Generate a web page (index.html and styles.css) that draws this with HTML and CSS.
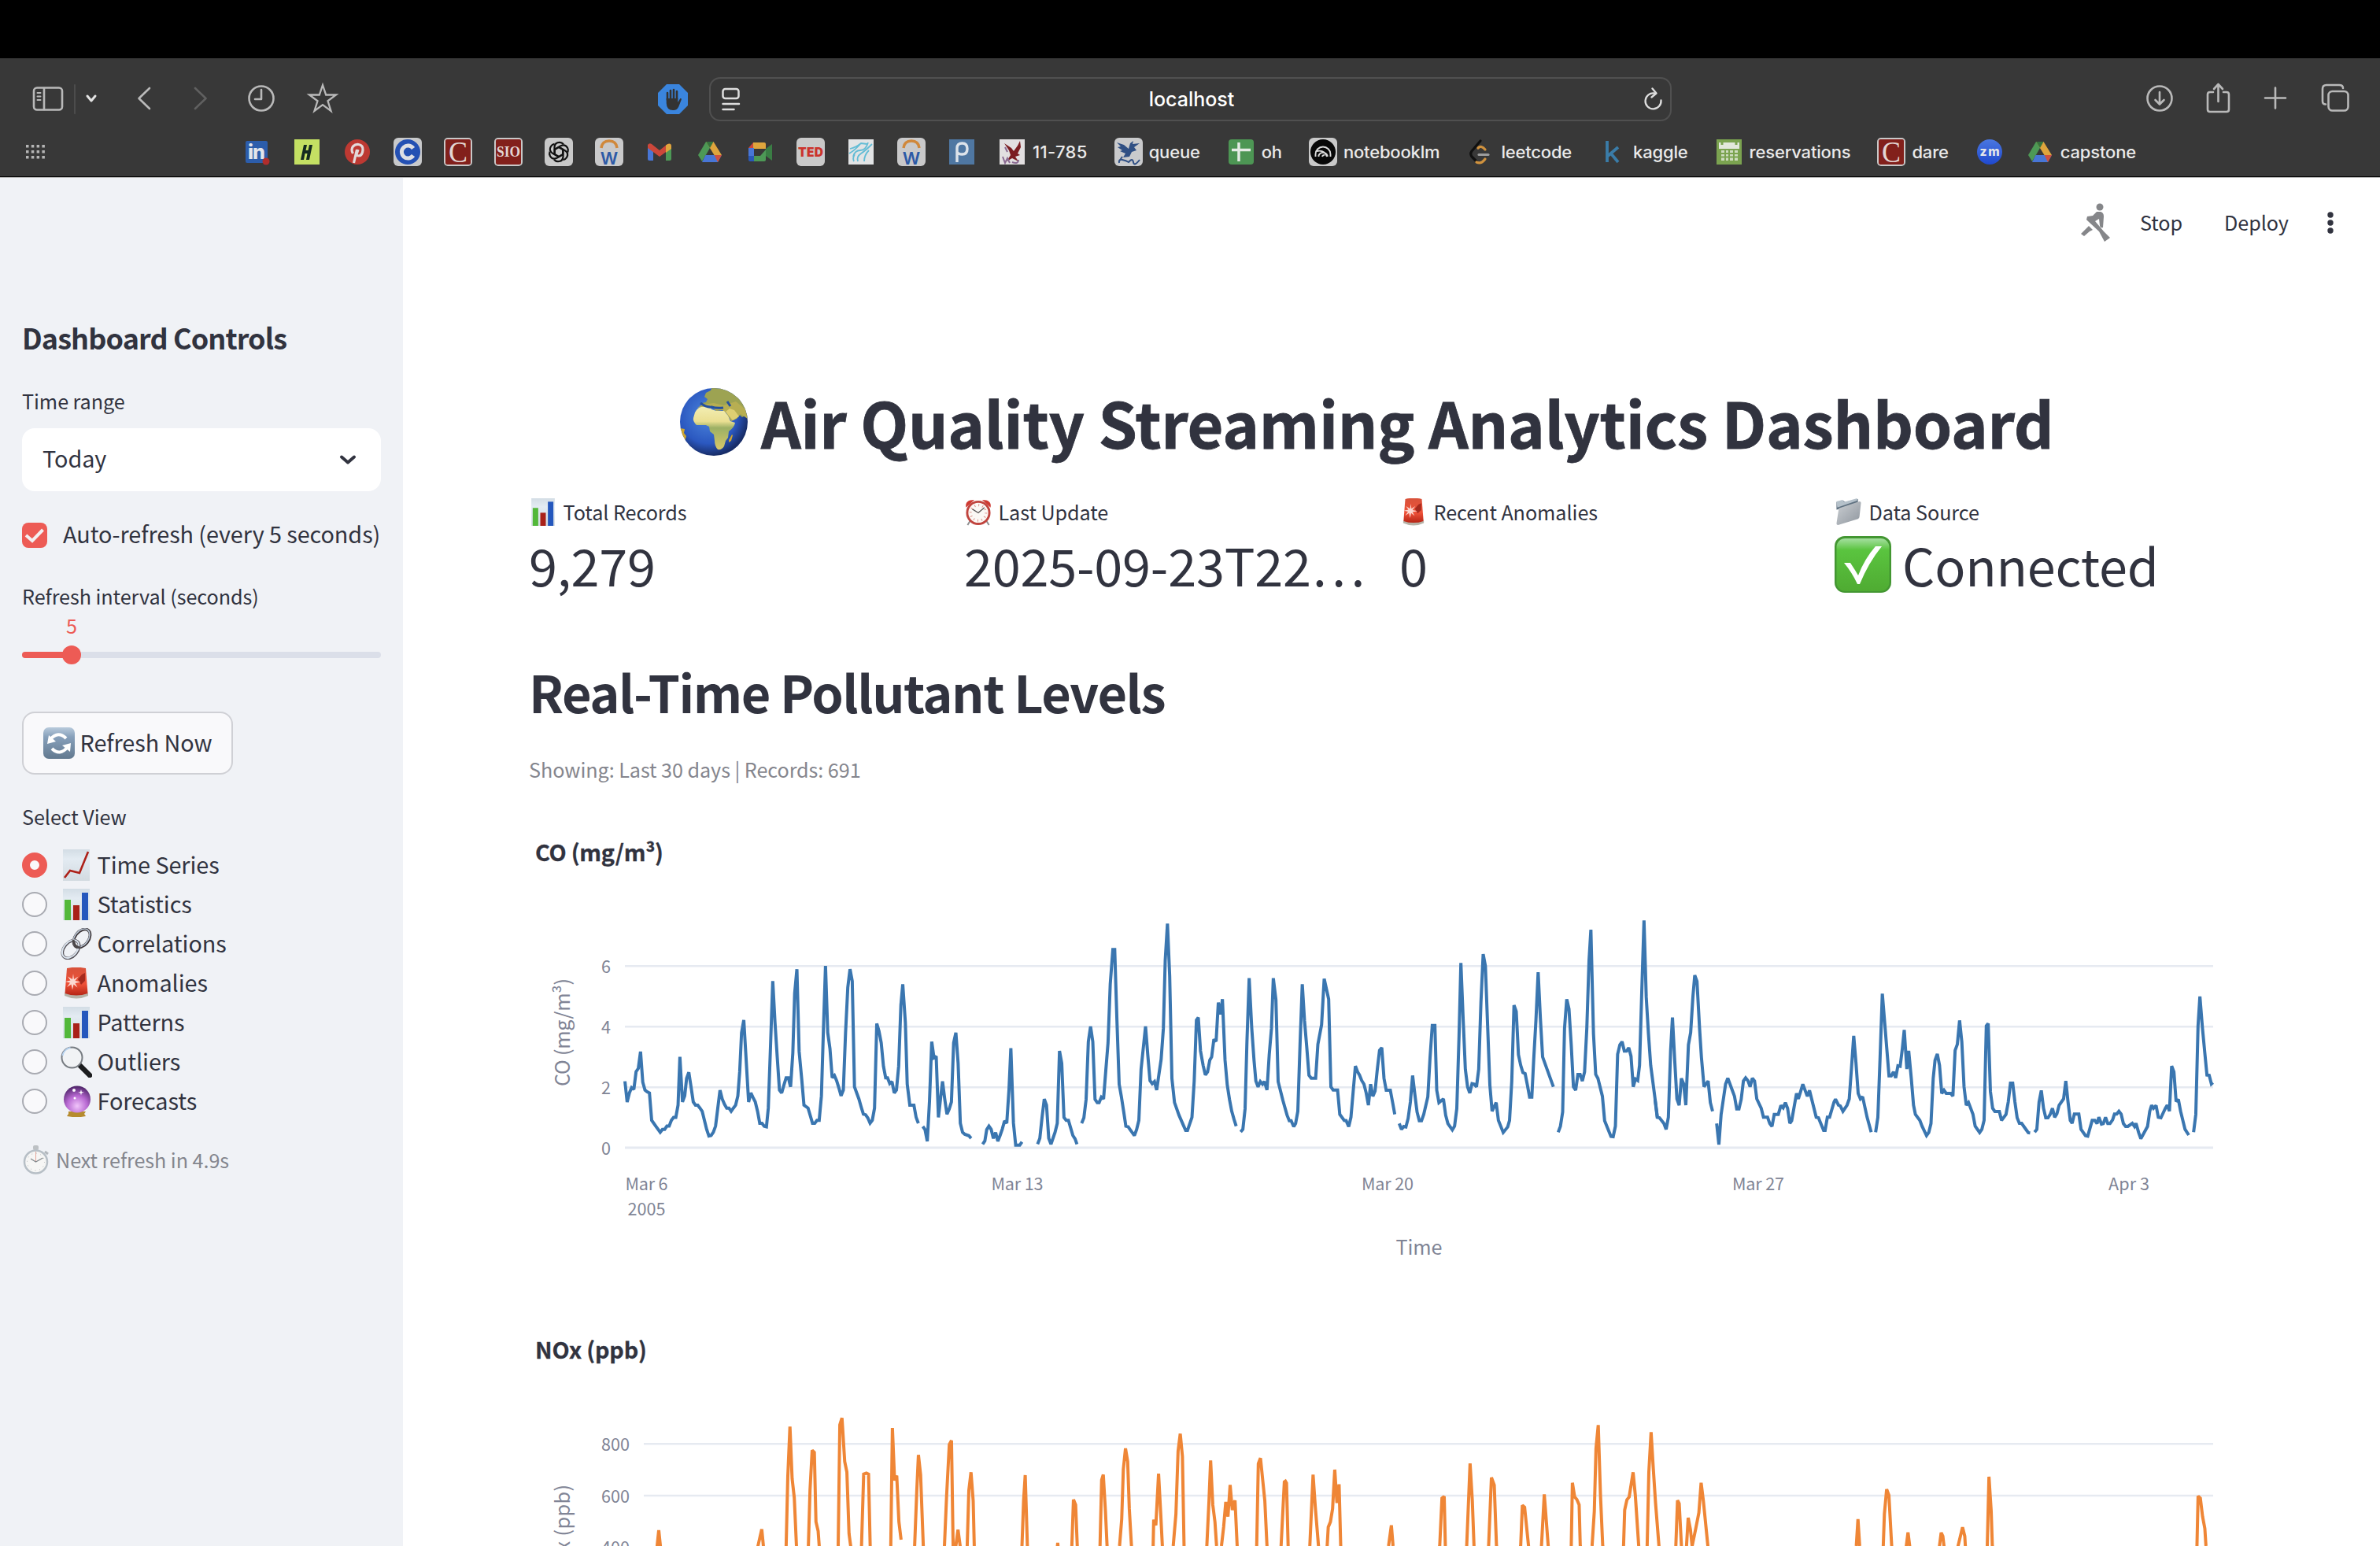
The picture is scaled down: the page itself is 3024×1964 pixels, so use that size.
FILE: index.html
```html
<!DOCTYPE html>
<html lang="en">
<head>
<meta charset="utf-8">
<title>Air Quality Streaming Analytics Dashboard</title>
<link rel="stylesheet" href="styles.css">
</head>
<body>
<svg class="defs" width="0" height="0" aria-hidden="true">
  <defs>
    <linearGradient id="paper" x1="0" y1="0" x2="0" y2="1"><stop offset="0" stop-color="#d3dde5"/><stop offset=".3" stop-color="#e3ebf2"/><stop offset="1" stop-color="#d3dbe1"/></linearGradient>
    <linearGradient id="steel" x1="0" y1="0" x2="0" y2="1"><stop offset="0" stop-color="#b9cbdc"/><stop offset=".3" stop-color="#87a0bb"/><stop offset="1" stop-color="#62798f"/></linearGradient>
    <linearGradient id="leaf" x1="0" y1="0" x2="0" y2="1"><stop offset="0" stop-color="#a5dfa0"/><stop offset=".22" stop-color="#5ac43f"/><stop offset="1" stop-color="#4fab32"/></linearGradient>
    <radialGradient id="ocean" cx=".42" cy=".4" r=".6"><stop offset="0" stop-color="#4d87dd"/><stop offset=".7" stop-color="#2b58c0"/><stop offset="1" stop-color="#182d68"/></radialGradient>
    <radialGradient id="orb" cx=".5" cy=".75" r=".75"><stop offset="0" stop-color="#f0c4fa"/><stop offset=".5" stop-color="#b869d2"/><stop offset="1" stop-color="#4b2266"/></radialGradient>
    <linearGradient id="lamp" x1="0" y1="0" x2="0" y2="1"><stop offset="0" stop-color="#d8523b"/><stop offset=".6" stop-color="#ee5138"/><stop offset="1" stop-color="#b52516"/></linearGradient>
    <linearGradient id="folder" x1="0" y1="0" x2="1" y2="1"><stop offset="0" stop-color="#ccd0d4"/><stop offset="1" stop-color="#8e959d"/></linearGradient>
    <linearGradient id="zoomblue" x1="0" y1="0" x2="0" y2="1"><stop offset="0" stop-color="#4a77e0"/><stop offset="1" stop-color="#1f49cf"/></linearGradient>
    <linearGradient id="land" x1="0" y1="0" x2="0" y2="1"><stop offset="0" stop-color="#f3eeb4"/><stop offset=".35" stop-color="#eadf92"/><stop offset=".5" stop-color="#9cb065"/><stop offset="1" stop-color="#d8c768"/></linearGradient>

    <symbol id="e-bars" viewBox="0 0 40 40"><rect x="3" width="34" height="40" fill="url(#paper)"/><rect x="5" y="14" width="8" height="26" fill="#53b83a"/><rect x="16" y="21" width="8" height="19" fill="#a92119"/><rect x="27" y="5" width="8" height="35" fill="#2457bd"/></symbol>
    <symbol id="e-line" viewBox="0 0 40 40"><rect x="3" width="34" height="40" fill="url(#paper)"/><path d="M5 36l7-9 12 3L35 3" fill="none" stroke="#ad2119" stroke-width="2.6"/></symbol>
    <symbol id="e-link" viewBox="0 0 40 40"><g fill="none"><ellipse cx="27" cy="13" rx="13" ry="8.6" transform="rotate(-52 27 13)" stroke="#3b3436" stroke-width="3.6"/><ellipse cx="26.5" cy="12.6" rx="13" ry="8.6" transform="rotate(-52 26.500 12.600)" stroke="#b9c4d3" stroke-width="1.6"/><ellipse cx="13" cy="27" rx="13" ry="8.600" transform="rotate(-50 13 27)" stroke="#545057" stroke-width="3.6"/><ellipse cx="12.600" cy="26.600" rx="13" ry="8.600" transform="rotate(-50 12.600 26.600)" stroke="#dbe4ee" stroke-width="2"/><path d="M16 15q1 9 8 10" stroke="#4b4749" stroke-width="3"/></g></symbol>
    <symbol id="e-siren" viewBox="0 0 40 40"><path d="M5 33q15-5 30 0v3q-15 7-30 0z" fill="#b6b3a8"/><path d="M8 1q12-2.500 24 0l2.500 32q-14.500 5-29 0z" fill="url(#lamp)"/><path d="M22 15l5-6 4-2 0 10-5 5z" fill="#a52a1e"/><path d="M16 8l1 7 5.500-3.500-4 5.500 7 1.500-7 1.500 3 5.500-5-4-1.500 7-1.500-7-5.500 3.500 4-5.500-6-1.500 6.500-1.500-3.500-5 6 3.500z" fill="#fbd9d2"/></symbol>
    <symbol id="e-glass" viewBox="0 0 40 40"><path d="M25 25l12 12" stroke="#1c1d1f" stroke-width="6.500" stroke-linecap="round"/><circle cx="14.500" cy="14.500" r="13" fill="#f1f3f5" stroke="#777c82" stroke-width="2"/><path d="M2.500 12a12.500 12.500 0 0 1 10-10" fill="none" stroke="#b8d3f0" stroke-width="2"/></symbol>
    <symbol id="e-orb" viewBox="0 0 40 40"><path d="M10 33h22l-2 3 2 3q-11 2.500-24 0l2-3z" fill="#b58b2e"/><circle cx="21" cy="17.500" r="17" fill="url(#orb)"/><circle cx="17" cy="6" r="2" fill="#fff"/><path d="M26 5l.8 3 3 .8-3 .8-.8 3-.8-3-3-.8 3-.8z" fill="#fff"/><circle cx="18" cy="16" r="1.500" fill="#fff"/></symbol>
    <symbol id="e-stop" viewBox="0 0 36 38"><rect x="14" y="1" width="7" height="6" rx="2" fill="#bdc1c4"/><path d="M29 9l4 3" stroke="#b2b7bc" stroke-width="3"/><circle cx="17.500" cy="22" r="14.500" fill="#f6f6f5" stroke="#b7bfc6" stroke-width="2.500"/><path d="M17.500 22V9" stroke="#e6a79b"/><path d="M11 18l6.500 4 9-5" fill="none" stroke="#81868a" stroke-width="1.300"/><circle cx="17.500" cy="22" r="11" fill="none" stroke="#b0b4b7" stroke-dasharray="1 4.760"/></symbol>
    <symbol id="e-alarm" viewBox="0 0 36 36"><path d="M7 30l-3 5M29 30l3 5" stroke="#8e8e90" stroke-width="2"/><path d="M2 12q-2-10 11-10zM34 12q2-10-11-10z" fill="#cf3a32"/><circle cx="18" cy="19" r="14.500" fill="#fbf8f5" stroke="#c0443e" stroke-width="3"/><path d="M10 14l8 5 8-7" fill="none" stroke="#565353" stroke-width="1.300"/><circle cx="18" cy="19" r="10" fill="none" stroke="#d98c85" stroke-width="3" stroke-dasharray="1 4.230"/></symbol>
    <symbol id="e-folder" viewBox="0 0 36 36"><path d="M2 5l9-2 2 2 17-4v8L2 15z" fill="#5f7180"/><path d="M2 4l8-2 2 3 17-5v3L3 12z" fill="#b5c1ca"/><path d="M5 13l27-9q2 0 2 2l-2 18q0 2-2 3L4 35q-2 0-2-2z" fill="url(#folder)"/></symbol>
    <symbol id="e-refresh" viewBox="0 0 40 40"><rect width="40" height="40" rx="7" fill="url(#steel)"/><path d="M9 15q10-11 20-1M31 25q-10 12-20 2" fill="none" stroke="#fff" stroke-width="4"/><path d="M7 10l-2 11 11-3zM24 23l11-3-1 11z" fill="#fff"/></symbol>
    <symbol id="e-check" viewBox="0 0 72 72"><rect width="72" height="72" rx="13" fill="#439632"/><rect x="2.500" y="3" width="67" height="67" rx="11" fill="url(#leaf)"/><path d="M12 34h8q6 9 10 16Q38 29 52 13h8Q43 34 32 61h-3Q22 46 12 34z" fill="#fff"/></symbol>
    <symbol id="e-globe" viewBox="0 0 86 86">
      <clipPath id="disc"><circle cx="43" cy="43" r="43"/></clipPath>
      <circle cx="43" cy="43" r="43" fill="url(#ocean)"/>
      <g clip-path="url(#disc)">
        <path d="M26 24l2-5 5-1 2-4-4-3 2-5 6-3 2-5h14l14 8 12 14 4 14-6 3-7-6-4 1-4-5-6 1-1-4-5 2-3-5-4 1 2 5-3 1-5-6-5 1-5 5-4-1z" fill="#9da352"/>
        <path d="M22 25l6-1 9-2 5 3 4 4 8-1 5 4 6 10 7-3 5-6 9 6-3-12-12-10-16 5-12-3-14 2z" fill="#b7ae52"/>
        <path d="M19 31q3-6 8-7l11-1 2 4 6 2 10 0 5 6 3 7 6 2q-1 6-8 11l-1 8-3 4-2 7q-3 5-8 4-4-4-4-11l-1-8-5-4-1-6-4-2-12 0q-5-5-4-9z" fill="url(#land)"/>
        <path d="M58 30l9 11 8-5-6-8-6-2z" fill="#dfcf72"/>
        <path d="M62 66l4-7 1 1-2 7-3 2zM0 51l6 1-1 5 3 4-2 7-5 5z" fill="#cfa62e"/>
        <path d="M26 19q8 6 14 5 6 2 15 1M60 17l4 6" fill="none" stroke="#24509f" stroke-width="3"/>
      </g>
    </symbol>
    <symbol id="i-drive" viewBox="0 0 30 26"><path d="M10 0h9.500L11 15 5 25 0 17z" fill="#4d9956"/><path d="M10 0h9.500L30 17h-9.500z" fill="#dfa53d"/><path d="M9.500 17H30l-5 9H5z" fill="#4876d6"/><path d="M20.500 17H30l-5 9z" fill="#cf5140"/><path d="M10 0h9.500L15 8z" fill="#36733e"/></symbol>
    <symbol id="i-cmu" viewBox="0 0 36 36"><rect width="36" height="36" rx="5" fill="#c9c8c8"/><rect x="2" y="2" width="32" height="32" rx="2" fill="#82201b"/></symbol>
    <symbol id="i-arcw" viewBox="0 0 36 36"><rect width="36" height="36" rx="6" fill="#c9c9ca"/><path d="M8 13q1-9 10-9t10 9" fill="none" stroke="#d0883b" stroke-width="3.500"/></symbol>
  </defs>
</svg>

<div class="notch"></div>
<header class="browser">
  <div class="toolbar">
    <svg class="tools tools-left" viewBox="0 0 440 56" fill="none" stroke="#b9b9b9" stroke-width="2.600" stroke-linecap="round" stroke-linejoin="round">
      <rect x="3" y="13.500" width="36" height="28" rx="4"/><path d="M16 14v27"/><path d="M7.500 20h4M7.500 24.500h4M7.500 29h4" stroke-width="2"/>
      <path d="M55 10v36" stroke="#4c4c4c" stroke-width="2"/><path d="M71 24l5 6 5-6" stroke="#e3e3e3" stroke-width="3"/>
      <path d="M150 14L136.500 27 150 40"/><path d="M208 14l13.500 13L208 40" stroke="#606060"/>
      <circle cx="292" cy="27" r="15.500"/><path d="M292 16v12h-8"/>
      <path d="M370 10l4.200 12.500H387l-10.500 7.800 4 12.700-10.500-7.800-10.500 7.800 4-12.700-10.500-7.800h12.800z" stroke-width="2.300" stroke-linejoin="miter"/>
    </svg>
    <svg class="blocker" viewBox="0 0 38 38"><path d="M11 0h16l11 11v16L27 38H11L0 27V11z" fill="#3a85de"/><path d="M12 20v-9M16 19V8M20 19V7M24 19V9" stroke="#333" stroke-width="2.600" stroke-linecap="round"/><path d="M10.700 18h14.600v5l3-5q2-.5 1.500 1.500l-3.500 9Q24 33.500 19 33q-8 0-8.300-9z" fill="#333"/></svg>
    <div class="address">
      <svg width="24" height="30" viewBox="0 0 24 30" fill="none" stroke="#dedede" stroke-width="2.500" stroke-linecap="round"><rect x="1.500" y="2" width="20" height="12" rx="3"/><path d="M1.500 21h20.500M1.500 28h14"/></svg>
      <span>localhost</span>
      <svg width="26" height="30" viewBox="0 0 26 30" fill="none" stroke="#dedede" stroke-width="2.300" stroke-linecap="round" stroke-linejoin="round"><path d="M15 7.500a10 10 0 1 0 8.500 9"/><path d="M12.500 1.500l5 6-6 5"/></svg>
    </div>
    <svg class="tools tools-right" viewBox="0 0 280 56" fill="none" stroke="#b9b9b9" stroke-width="2.600" stroke-linecap="round" stroke-linejoin="round">
      <circle cx="24" cy="27" r="15.500"/><path d="M24 19v15M18.500 29l5.500 5.500 5.500-5.500"/>
      <path d="M92 19h-4q-3 0-3 3v19q0 3 3 3h21q3 0 3-3V22q0-3-3-3h-4"/><path d="M98.500 31V9M93 15l5.500-6 5.500 6"/>
      <path d="M158 26.500h26M171 13.500v26"/>
      <rect x="238.500" y="18" width="25" height="24.500" rx="5"/><path d="M235 34.500q-4 0-4-4V15q0-5 5-5h16q5 0 5 4"/>
    </svg>
  </div>
  <nav class="bookmarks">
    <svg class="apps" viewBox="0 0 24 18" fill="#b5b5b5"><path d="M0 0h3.500v3.500H0zM6.800 0h3.500v3.500H6.800zM13.600 0h3.500v3.500h-3.500zM20.400 0h3.500v3.500h-3.500zM0 7h3.500v3.500H0zM6.800 7h3.500v3.500H6.800zM13.600 7h3.500v3.500h-3.500zM20.400 7h3.500v3.500h-3.500zM0 14h3.500v3.500H0zM6.800 14h3.500v3.500H6.800zM13.600 14h3.500v3.500h-3.500zM20.400 14h3.500v3.500h-3.500z"/></svg>
    <svg class="fav" viewBox="0 0 36 36"><rect x="4" y="4" width="28" height="28" rx="2" fill="#2c5dab"/><text class="g-sans" x="18" y="27" font-size="25" textLength="22">in</text><circle cx="30" cy="30" r="4.500" fill="#b02d2c"/></svg>
    <svg class="fav" viewBox="0 0 36 36"><rect x="2" y="2" width="32" height="32" fill="#c4e063"/><path d="M14 9h4l-1.500 7h3L21 9h4l-4 19h-4l1.500-8h-3L14 28h-4z" fill="#132a20"/></svg>
    <svg class="fav" viewBox="0 0 36 36"><circle cx="18" cy="18" r="16" fill="#bd3932"/><path d="M12.500 20q-3-5 0-9 3-3 7-2.500 6 1 5.500 7-.5 7-5 7.500-3 0-3-2l2-6M17.500 15L13.500 32" fill="none" stroke="#e3dada" stroke-width="3.200"/></svg>
    <svg class="fav" viewBox="0 0 36 36"><rect width="36" height="36" rx="6" fill="#c8c9cb"/><circle cx="18" cy="18" r="16" fill="#2450b3"/><path d="M25 13.500a8 8 0 1 0 0 9" fill="none" stroke="#dedfe4" stroke-width="5"/></svg>
    <svg class="fav" viewBox="0 0 36 36"><use href="#i-cmu"/><text class="g-serif" x="18" y="31" font-size="38" textLength="24" lengthAdjust="spacingAndGlyphs">C</text></svg>
    <svg class="fav" viewBox="0 0 36 36"><use href="#i-cmu"/><text class="g-serif" x="18" y="24" font-size="18" font-weight="bold" textLength="30" lengthAdjust="spacingAndGlyphs">SIO</text></svg>
    <svg class="fav" viewBox="0 0 36 36"><rect width="36" height="36" rx="6" fill="#c9c9c9"/><g fill="none" stroke="#111" stroke-width="2.200"><path id="knot" d="M18 12l5.500 3.200v9q-.5 6-6.500 6-3 0-5-2.500"/><use href="#knot" transform="rotate(60 18 18)"/><use href="#knot" transform="rotate(120 18 18)"/><use href="#knot" transform="rotate(180 18 18)"/><use href="#knot" transform="rotate(240 18 18)"/><use href="#knot" transform="rotate(300 18 18)"/></g></svg>
    <svg class="fav" viewBox="0 0 36 36"><use href="#i-arcw"/><text class="g-sans g-blue" x="18" y="33.500" font-size="22">W</text></svg>
    <svg class="fav" viewBox="0 0 36 36"><path d="M3 10h7v19H5q-2 0-2-2z" fill="#4876d6"/><path d="M26 10h7v17q0 2-2 2h-5z" fill="#4d9956"/><path d="M3 13V9q2-3 5-1l10 8 10-8q4-1 5 2v3L18 24z" fill="#cc473a"/><path d="M26 9.500q6-4 7 .5v4l-7 5z" fill="#dfa53d"/></svg>
    <svg class="fav" viewBox="0 0 36 36"><use href="#i-drive" x="3" y="5" width="30" height="26"/></svg>
    <svg class="fav" viewBox="0 0 36 36"><path d="M9 6v7H3z" fill="#cc473a"/><path d="M9 6h14q2 0 2 2v6H9z" fill="#dfa53d"/><path d="M3 13h7v10H3z" fill="#4876d6"/><path d="M3 23h7v7H5q-2 0-2-2z" fill="#2a59b8"/><path d="M10 23h8l7-8v13q0 2-2 2H10z" fill="#4d9956"/><path d="M25 14l8-6v21l-8-6z" fill="#3a7d44"/></svg>
    <svg class="fav" viewBox="0 0 36 36"><rect width="36" height="36" rx="6" fill="#c9c9c9"/><text class="g-sans g-red" x="18" y="23.500" font-size="15.500" textLength="32">TED</text></svg>
    <svg class="fav" viewBox="0 0 36 36"><rect x="2" y="2" width="32" height="32" fill="#e2e4e5"/><path d="M3 20q7-4 14-12M8 24q2-8 9-8t10-10M4 14q8-2 14-7l8 1M14 30q-2-6 4-10t14-12M22 30q0-8 6-14M9 30q-2-4 1-9" fill="none" stroke="#62bcd5" stroke-width="1.800"/></svg>
    <svg class="fav" viewBox="0 0 36 36"><use href="#i-arcw"/><text class="g-sans g-blue" x="18" y="33.500" font-size="22">W</text></svg>
    <svg class="fav" viewBox="0 0 36 36"><rect x="2" y="2" width="32" height="32" fill="#4f77a2"/><path d="M12 31V13q0-6 6.500-6T25 14t-6.500 7q-5 0-6.500-3" fill="none" stroke="#dde3ea" stroke-width="3.400"/></svg>
    <span class="mark wide"><svg class="fav" viewBox="0 0 36 36"><rect x="2" y="2" width="32" height="32" fill="#e2dfe0"/><path d="M8 7l9 6 3 4 5-7 3-6 1 8-4 8 3 2-6 2 4 6-8-4-7 4 5-8-2-6z" fill="#7b1c20"/><path d="M6 24l3 8 3-6 3 6M18 31q8 3 8-3M9 12l3 6" fill="none" stroke="#8a6a92" stroke-width="2"/></svg>11-785</span>
    <span class="mark"><svg class="fav" viewBox="0 0 36 36"><rect width="36" height="36" rx="6" fill="#c9cacc"/><path d="M3 6l9 3 6 5 2-7 4-3-1 4 9-1-7 5 3 4-6 2-3 6-8 1 3-5-7-3 3-1-6-4 4-1z" fill="#2f4f84"/><path d="M6 32q-1-5 4-4t8 3q5-6 6 0t8-3M10 24l-4 6" fill="none" stroke="#2f4f84" stroke-width="2"/></svg>queue</span>
    <span class="mark"><svg class="fav" viewBox="0 0 36 36"><rect x="2" y="2" width="32" height="32" rx="4" fill="#4d9654"/><path d="M15 6v24M6 15.500h24" stroke="#e5ebe5" stroke-width="3.500"/></svg>oh</span>
    <span class="mark"><svg class="fav" viewBox="0 0 36 36"><rect width="36" height="36" rx="6" fill="#c9c9c9"/><circle cx="18" cy="18" r="16" fill="#080808"/><path d="M8.500 24v-3a9.500 9.500 0 0 1 19 0v3M12.500 24v-1.500a6 6 0 0 1 11 0V24M17 24a2.500 2.500 0 0 1 3-2M10 17q10-2 13 7" fill="none" stroke="#ddd" stroke-width="1.900"/></svg>notebooklm</span>
    <span class="mark"><svg class="fav" viewBox="0 0 36 36" fill="none" stroke-linecap="round" stroke-width="3.200"><path d="M18 4L7 17q-3 4 1 8l5 5" stroke="#101010"/><path d="M24 15q-5-6-9-2M24 27q-5 7-11 4" stroke="#d0923e"/><path d="M16 21.500h12" stroke="#9d9d9d"/></svg>leetcode</span>
    <span class="mark"><svg class="fav" viewBox="0 0 36 36" fill="none" stroke="#3a7ca8" stroke-width="3.800"><path d="M11 4v27M25 12L12 23M15 19l10 12"/></svg>kaggle</span>
    <span class="mark"><svg class="fav" viewBox="0 0 36 36"><rect x="2" y="2" width="32" height="32" fill="#7ba350"/><path d="M5 6h26v8H5z" fill="#e3e8dc"/><path d="M9 3v6M27 3v6" stroke="#7ba350" stroke-width="3"/><path d="M8 16h21v13H8z" fill="#cfdcc0"/><path d="M8 20h21M8 24.500h21M13 16v13M18 16v13M24 16v13" stroke="#7ba350" stroke-width="2"/></svg>reservations</span>
    <span class="mark"><svg class="fav" viewBox="0 0 36 36"><use href="#i-cmu"/><text class="g-serif" x="18" y="31" font-size="38" textLength="24" lengthAdjust="spacingAndGlyphs">C</text></svg>dare</span>
    <svg class="fav" viewBox="0 0 36 36"><circle cx="18" cy="18" r="16" fill="url(#zoomblue)"/><text class="g-sans" x="18" y="23" font-size="15.500" textLength="25">zm</text></svg>
    <span class="mark"><svg class="fav" viewBox="0 0 36 36"><use href="#i-drive" x="3" y="5" width="30" height="26"/></svg>capstone</span>
  </nav>
</header>

<div class="app">
  <aside class="sidebar">
    <h3>Dashboard Controls</h3>
    <label class="field-label range-label">Time range</label>
    <div class="select"><span>Today</span><svg width="22" height="14" viewBox="0 0 22 14"><path d="M3 3.500l8 7 8-7" fill="none" stroke="#31333f" stroke-width="4" stroke-linecap="round" stroke-linejoin="round"/></svg></div>
    <div class="check-row"><span class="box"><svg width="32" height="32" viewBox="0 0 32 32"><path d="M5 16l8 7L26.500 9" fill="none" stroke="#f3f0f2" stroke-width="4"/></svg></span><span class="nudge">Auto-refresh (every 5 seconds)</span></div>
    <label class="field-label interval-label">Refresh interval (seconds)</label>
    <div class="slider"><div class="slider-value">5</div><div class="track"><div class="fill"></div><div class="thumb"></div></div></div>
    <button class="refresh"><svg width="40" height="40"><use href="#e-refresh"/></svg><span class="nudge">Refresh Now</span></button>
    <label class="field-label view-label">Select View</label>
    <ul class="views">
      <li><i class="radio on"></i><svg><use href="#e-line"/></svg><span>Time Series</span></li>
      <li><i class="radio"></i><svg><use href="#e-bars"/></svg><span>Statistics</span></li>
      <li><i class="radio"></i><svg><use href="#e-link"/></svg><span>Correlations</span></li>
      <li><i class="radio"></i><svg><use href="#e-siren"/></svg><span>Anomalies</span></li>
      <li><i class="radio"></i><svg><use href="#e-bars"/></svg><span>Patterns</span></li>
      <li><i class="radio"></i><svg><use href="#e-glass"/></svg><span>Outliers</span></li>
      <li><i class="radio"></i><svg><use href="#e-orb"/></svg><span>Forecasts</span></li>
    </ul>
    <div class="next"><svg width="36" height="38"><use href="#e-stop"/></svg><span>Next refresh in 4.9s</span></div>
  </aside>

  <main class="main">
    <div class="status">
      <svg width="38" height="50" viewBox="0 0 38 50" fill="#858689"><circle cx="24" cy="5" r="4.500"/><path d="M20 11h5q4 1 4 6l-1 14q-3 1-4-2l-1-9-5 3 11 13 8 8-7 5-7-13L9 23l-2-2 1-4 7-1z"/><path d="M10 29l5 5-4 2-7 6-4-3z"/></svg>
      <span class="stop">Stop</span><span class="deploy">Deploy</span>
      <svg width="10" height="28" viewBox="0 0 10 28" fill="#31333f"><circle cx="5" cy="4" r="3.700"/><circle cx="5" cy="14" r="3.700"/><circle cx="5" cy="24" r="3.700"/></svg>
    </div>
    <h1><svg width="86" height="86"><use href="#e-globe"/></svg><span>Air Quality Streaming Analytics Dashboard</span></h1>
    <section class="metrics">
      <div><p class="m-label"><svg><use href="#e-bars"/></svg>Total Records</p><p class="m-value">9,279</p></div>
      <div><p class="m-label"><svg><use href="#e-alarm"/></svg>Last Update</p><p class="m-value">2025-09-23T22…</p></div>
      <div><p class="m-label"><svg><use href="#e-siren"/></svg>Recent Anomalies</p><p class="m-value">0</p></div>
      <div><p class="m-label"><svg><use href="#e-folder"/></svg>Data Source</p><p class="m-value"><svg width="72" height="72"><use href="#e-check"/></svg>Connected</p></div>
    </section>
    <h2>Real-Time Pollutant Levels</h2>
    <p class="caption">Showing: Last 30 days | Records: 691</p>

    <svg class="chart" viewBox="672 1041 2180 580" width="2180" height="580">
      <text class="c-title" x="680" y="1094" textLength="163">CO (mg/m³)</text>
      <path class="grid" d="M794 1227.300H2812M794 1304.300H2812M794 1381.200H2812"/><path class="grid zero" d="M794 1458H2812"/>
      <g class="tick y"><text x="776" y="1235.500">6</text><text x="776" y="1312.500">4</text><text x="776" y="1389.500">2</text><text x="776" y="1466.500">0</text></g>
      <g class="tick"><text x="821.500" y="1511.500" textLength="54">Mar 6</text><text x="821.500" y="1543.500" textLength="48">2005</text><text x="1292.500" y="1511.500" textLength="66">Mar 13</text><text x="1763" y="1511.500" textLength="66">Mar 20</text><text x="2234" y="1511.500" textLength="66">Mar 27</text><text x="2705" y="1511.500" textLength="52">Apr 3</text></g>
      <text class="axis" x="1803" y="1593.500" textLength="59">Time</text>
      <text class="axis" transform="translate(723.500 1311.500) rotate(-90)" textLength="137">CO (mg/m³)</text>
      <g class="co">
        <path transform="matrix(.47194 0 0 .3699 660 1040)" d="M284,902 290,973 296,942 302,924 308,930 314,869 320,858 326,800 332,905 338,932 344,938 350,942 356,1036 367,1056 379,1077 385,1067 391,1067 397,1056 403,1056 409,1036 415,1026 421,1026 427,984 432,818 439,973 445,952 450,892 456,871 462,921 468,973 474,984 480,984 486,994 492,1005 498,1036 504,1067 510,1090 516,1088 522,1077 528,1056 534,994 540,933 546,963 552,981 558,994 564,994 570,1005 576,994 582,984 588,952 593,869 598,735 604,692 610,820 617,973 623,942 629,958 635,973 641,1005 647,1046 653,1046 659,1056 665,1058 670,994 676,780 682,558 688,700 694,818 700,932 706,942 712,915 718,890 724,890 730,921 736,805 741,600 747,517 753,800 760,895 766,984 777,994 783,1020 789,1046 795,1046 801,1036 807,1036 813,952 819,700 824,506 830,735 836,790 842,890 848,882 854,900 860,925 866,952 872,932 878,735 884,580 890,517 896,558 902,921 908,942 914,963 920,990 926,1015 932,1017 938,1028 944,1046 950,1036 956,994 959,850 962,704 968,730 974,770 980,850 986,890 991,890 997,910 1003,903 1009,942 1015,932 1021,850 1027,640 1032,569 1039,700 1044,912 1051,984 1062,984 1068,1026 1074,1046M1086,1057 1092,1068 1098,1108 1104,970 1110,766 1116,821 1122,816 1128,1026 1139,902 1145,963 1151,1015 1157,998 1163,973 1169,770 1175,735 1181,840 1187,1046 1193,1077 1199,1084 1210,1089 1216,1098M1247,1118 1253,1107 1258,1068 1264,1056 1270,1067 1276,1098 1282,1078 1288,1108 1294,1088 1300,1066 1306,1038 1312,1046 1318,930 1323,788 1330,1046 1336,1121 1347,1121 1353,1110M1395,1118 1401,1098 1407,1026 1413,963 1419,984 1425,1098 1431,1118 1442,1077 1448,1046 1454,798 1460,840 1466,1026 1472,1036 1478,1036 1484,1062 1490,1088 1496,1100 1501,1118"/>
        <path transform="matrix(.47194 0 0 .33333 1380 1140)" d="M-12,861 -6,840 0,770 6,550 12,492 18,550 24,770 30,782 35,782 41,761 47,768 53,660 59,555 65,330 72,199 77,199 83,470 89,712 95,760 101,815 107,872 113,874 119,886 130,908 136,885 142,850 148,655 160,492 166,600 172,698 178,710 184,702 190,734 196,675 202,617 208,500 213,240 219,100 225,300 231,690 238,782 250,830 262,869 268,888 273,888 279,863 285,838 291,700 297,468 302,458 308,585 315,640 321,677 327,665 333,620 338,608 344,541 350,549 356,401 362,446 367,388 374,620 380,715 386,770 392,815 398,845 404,872M416,894 422,884 428,806 433,550 439,308 446,500 452,620 457,700 463,722 469,702 475,712 480,702 487,734 493,600 499,500 504,308 511,390 517,702 530,775 541,830 547,851 552,851 559,874 564,862 570,815 576,560 582,331 588,470 594,570 600,678 606,689 618,689 624,560 634,485 641,310 653,388 659,722 665,734 677,734 683,827 695,850 700,851 707,874 713,838 719,740 725,643 731,665 736,677 742,698 748,712 754,745 760,792 766,712 772,758 778,738 784,655 790,583 796,573 802,690 808,735 819,735 825,780 831,827M843,862 849,884 855,873 861,875 867,842 873,780 879,679 885,750 891,818 897,851 903,851 909,827 920,760 926,610 932,488 939,488 944,735 950,782 962,768 968,830 974,862 986,886 992,872 998,805 1004,530 1009,250 1015,460 1021,655 1027,722 1033,746 1039,710 1045,712 1051,722 1057,655 1063,400 1069,216 1075,262 1081,490 1087,715 1093,815 1104,782 1110,850 1123,896 1135,875 1140,850 1146,700 1152,411 1158,435 1164,600 1170,640 1176,668 1182,672 1188,715 1194,761 1200,761 1205,620 1211,470 1217,285 1223,460 1229,608 1241,655 1258,722M1271,895 1277,872 1283,818 1288,500 1294,388 1300,425 1306,560 1312,722 1318,735 1324,675 1330,675 1336,700 1342,665 1348,500 1354,240 1359,123 1366,520 1372,675 1378,690 1390,758 1396,851 1413,911 1419,912 1425,872 1431,598 1437,562 1443,550 1449,586 1455,586 1461,573 1467,605 1473,722 1479,692 1485,698 1490,640 1496,360 1502,88 1508,380 1514,520 1520,640 1532,770 1538,838"/>
        <path transform="matrix(.47194 0 0 .33333 2100 1140)" d="M6,770 12,838 18,840 30,862 36,884 42,838 48,585 53,458 59,620 65,768 71,792 77,690 83,710 89,792 96,562 102,515 108,380 113,297 119,320 126,500 131,610 138,722 149,700 155,782 161,815M172,862 178,942 184,827 196,712 202,689 214,735 220,758 226,806 232,806 238,770 244,700 250,688 256,698 262,722 268,689 274,700 280,768 292,804 298,838 309,838 315,862 321,873 327,827 338,827 345,793 351,802 357,782 363,804 369,861 374,851 387,747 392,768 404,712 416,758 422,736 440,838 446,840 460,888 464,888 470,838 476,838 488,780 492,769 500,792 505,795 512,815 523,792 529,768 535,650 541,528 547,630 553,747 559,768 565,760 577,838 588,895M600,895 606,838 612,610 618,367 636,680 642,680 648,665 654,688 660,642 666,644 672,575 677,505 684,654 689,585 696,690 702,792 707,827 719,850 725,872 737,908 743,896 749,862 755,690 760,620 766,597 772,640 778,747 784,735 790,747 802,747 808,757 814,583 820,560 826,469 832,550 838,722 844,792 850,782 862,827 868,872 880,896 886,884 892,850 898,490 903,481 909,740 915,804 921,816 933,816 939,850 951,827 957,780 963,708 969,708 975,780 981,840 987,861 993,861 1005,885 1011,897 1016,898M1028,895 1034,884 1040,780 1046,736 1052,804 1058,840 1064,840 1070,827 1076,804 1082,838 1088,825 1094,792 1106,768 1112,700 1118,780 1124,850 1129,861 1135,826 1147,826 1153,884 1165,908 1171,910 1183,850 1190,850 1196,862 1201,838 1208,864 1213,862 1219,838 1225,862 1231,862 1238,848 1243,826 1249,826 1255,815 1261,826 1267,862 1273,873 1279,873 1291,861 1297,873 1301,861 1308,896 1314,920 1332,873 1338,815 1343,792 1348,804 1355,793 1361,838 1368,840 1380,804 1385,792 1391,815 1397,643 1403,665 1409,778 1415,770 1421,815 1433,884 1443,906M1456,895 1462,827 1468,490 1473,378 1480,500 1486,590 1492,677 1498,678 1504,711 1508,706"/>
      </g>
    </svg>

    <svg class="chart second" viewBox="672 1661 2180 304" width="2180" height="304">
      <text class="c-title" x="680" y="1726" textLength="142">NOx (ppb)</text>
      <path class="grid" d="M818 1834.300H2812M818 1900H2812"/>
      <g class="tick y"><text x="800" y="1842.500" textLength="36">800</text><text x="800" y="1908.500" textLength="36">600</text><text x="800" y="1974" textLength="36">400</text></g>
      <text class="axis y" transform="translate(724 1886) rotate(-90)" textLength="122">NOx (ppb)</text>
      <g class="nox">
        <path transform="matrix(.68878 0 0 .33333 660 1660)" d="M250,1100 254,912 257,852 260,912 264,1100M430,1100 440,912 447,848 450,912 455,1100M488,1100 492,912 495,650 499,457 503,655 507,728 511,912 515,1100M530,1000 533,912 536,700 540,547 544,555 547,820 551,855 553,912 556,1100M586,1100 588,912 591,450 595,424 600,590 604,630 608,865 611,912 614,1050M628,1050 631,912 635,638 640,634 644,638 647,912 649,1100M683,1100 685,912 688,462 692,662 696,644 700,820 704,888M726,1050 729,912 733,700 736,565 740,640 745,912 749,1100M780,1100 784,912 788,720 793,525 797,510 800,912 802,1100 805,912 809,850 813,912 818,1000 822,1000 826,912 829,700 833,631 837,740 839,912 842,1100M924,1100 927,912 930,740 933,642 937,912 940,1100M988,1000 993,900 997,1000M1010,1100 1019,912 1022,735 1026,755 1029,912 1033,1100M1068,1100 1071,912 1074,660 1077,640 1081,780 1084,912 1088,1100M1102,1000 1107,912 1111,810 1114,620 1118,540 1122,590 1125,770 1129,912 1133,1100M1167,1100 1169,912 1170,812 1174,833 1179,636 1183,790 1186,912 1190,1100M1200,1000 1206,912 1211,790 1215,550 1219,484 1223,570 1226,912 1230,1100M1264,1100 1268,912 1272,740 1275,586 1279,755 1283,820 1286,912 1290,980 1295,912 1299,840 1303,744 1307,800 1311,679 1315,775 1320,738 1324,912 1328,1100M1356,1100 1360,912 1363,598 1367,577 1375,740 1379,912 1383,1100M1400,1100 1405,912 1411,668 1413,665 1415,672 1418,912 1422,1100M1455,1100 1458,912 1464,640 1468,760 1474,912 1478,1050 1488,1050 1490,912 1492,840 1496,820 1500,770 1504,621 1508,748 1512,677 1515,912 1518,1100"/>
        <path transform="matrix(.71429 0 0 .33333 1720 1760)" d="M58,660 62,612 67,533 70,612 75,700M150,700 153,612 157,430 161,423 163,612 166,800M199,750 201,612 207,297 211,440 214,612 217,750M236,750 240,612 245,351 250,380 254,612 258,750M294,700 297,612 300,457 304,464 311,612 315,700M332,700 334,612 339,415 346,612 350,700M385,700 387,612 389,371 393,425 397,435 401,455 403,612 406,700M418,700 424,612 428,480 431,240 435,151 439,420 443,612 447,700M478,700 480,612 482,475 486,436 490,425 497,331 501,420 507,612 510,700M520,700 522,612 525,330 529,178 533,320 537,450 543,612 547,700M571,700 573,612 576,438 579,450 583,612 586,700M590,650 592,612 595,504 599,550 602,612 608,550 614,485 618,371 622,440 630,612 634,700M890,700 894,612 897,510 900,612 904,700M939,700 942,612 944,490 948,396 952,418 957,612 960,700M980,700 983,612 986,560 989,612 993,700M1039,700 1042,612 1045,561 1048,575 1050,612 1055,700M1070,700 1075,612 1083,541 1087,575 1088,612 1092,700M1125,700 1127,612 1130,348 1134,480 1136,612 1140,700M1497,700 1500,612 1502,422 1506,430 1510,500 1514,545 1516,612 1520,700"/>
      </g>
    </svg>
  </main>
</div>
</body>
</html>
```
FILE: styles.css
```css
* { box-sizing: border-box; }
body {
  margin: 0;
  width: 3024px;
  height: 1964px;
  overflow: hidden;
  background: #fff;
  color: #31333f;
  font-family: "Noto Sans CJK JP", "Noto Sans CJK SC", "Noto Sans", sans-serif;
  font-size: 28.8px;
  letter-spacing: -.07px;
}
h1, h2, h3, p, ul { margin: 0; padding: 0; }
svg { display: block; flex: none; }
.defs { position: absolute; }

/* Browser chrome */
.notch { height: 74px; background: #000; }
.browser {
  height: 152px;
  background: #383838;
  border-bottom: 1px solid #b9b9b9;
  box-shadow: inset 0 -1px #000;
  font-family: Inter, "Liberation Sans", sans-serif;
  color: #eaeaea;
}
.toolbar { display: flex; align-items: center; height: 80px; padding: 24px 0 0 40px; }
.tools { height: 56px; }
.tools-left { width: 440px; }
.tools-right { width: 280px; margin-left: 596px; }
.blocker { width: 38px; height: 38px; margin-left: 356px; }
.address {
  display: flex; align-items: center; justify-content: space-between;
  width: 1223px; height: 56px; margin-left: 27px; padding: 0 9px 0 14px;
  border: 2px solid #505050; border-radius: 14px;
  color: #fff; font-size: 25px; font-weight: 500; letter-spacing: 0;
}
.bookmarks { display: flex; align-items: center; gap: 28px; height: 36px; margin-top: 21px; padding-left: 33px; font-size: 22px; font-weight: 500; letter-spacing: -.18px; }
.apps { width: 24px; height: 18px; margin-right: 223px; }
.fav { width: 36px; height: 36px; overflow: visible; letter-spacing: 0; }
.mark { display: flex; align-items: center; gap: 8px; margin-right: 6px; white-space: nowrap; }
.wide { letter-spacing: .35px; }
.g-sans { font-family: Inter, sans-serif; font-weight: 800; fill: #e4e6ea; text-anchor: middle; }
.g-serif { font-family: "Liberation Serif", serif; fill: #e2d6d4; text-anchor: middle; }
.g-blue { fill: #2c5aa6; font-weight: 600; }
.g-red { fill: #cb332c; font-weight: 900; }

/* Page */
.app { display: flex; height: 1738px; }

/* Sidebar */
.sidebar { width: 512px; padding: 178px 28px 0; background: #f0f2f6; white-space: nowrap; }
.sidebar h3 { height: 48px; line-height: 48px; font-size: 36px; font-weight: 700; letter-spacing: -.9px; }
.field-label { display: block; height: 40px; line-height: 40px; font-size: 25.2px; }
.range-label { margin-top: 37px; }
.interval-label { margin-top: 33px; }
.view-label { margin-top: 33px; }
.nudge { margin-top: -5px; }
.refresh .nudge { margin-top: -3px; }
.select { display: flex; align-items: center; justify-content: space-between; height: 80px; margin-top: 15px; padding: 0 31px 0 26px; border-radius: 16px; background: #fff; }
.select span { margin-top: -5px; }
.check-row { display: flex; align-items: center; gap: 20px; height: 48px; margin-top: 32px; }
.box { width: 32px; height: 32px; border-radius: 8px; background: #ed5b55; }
.slider-value { width: 126px; height: 36px; margin-top: -1px; line-height: 36px; font-size: 25.2px; color: #ed5b55; text-align: center; }
.track { position: relative; height: 8px; margin-top: 16px; border-radius: 4px; background: #dbdfe9; }
.fill { width: 63px; height: 8px; border-radius: 4px; background: #ed5b55; }
.thumb { position: absolute; left: 51px; top: -8px; width: 24px; height: 24px; border-radius: 50%; background: #ed5b55; }
.refresh { display: flex; align-items: center; gap: 6.5px; width: 268px; height: 80px; margin-top: 68px; padding: 0 25px; border: 2px solid #cfd0d5; border-radius: 16px; background: #f9f9fb; color: inherit; font: inherit; letter-spacing: inherit; white-space: nowrap; }
.views { margin-top: 17px; list-style: none; }
.views li { display: flex; align-items: center; height: 50px; }
.views svg { width: 40px; height: 40px; margin: 0 6.5px 0 17px; }
.views span { margin-top: -3px; }
.radio { width: 32px; height: 32px; border: 2px solid #a9abb2; border-radius: 50%; background: #f9f9fb; }
.radio.on { border: 10px solid #ed5b55; }
.next { display: flex; align-items: center; gap: 7px; height: 40px; margin-top: 29px; line-height: 40px; font-size: 25.2px; color: #84868e; }

/* Main column */
.main { flex: 1; padding-left: 160px; white-space: nowrap; }
.status { display: flex; align-items: center; height: 114px; margin-left: 1972px; font-size: 25.2px; }
.stop { width: 54px; margin: -3px 0 0 37px; }
.deploy { width: 82px; margin: -3px 48px 0 53px; }
h1 { display: flex; align-items: center; gap: 17px; height: 106px; margin: 143px 0 0 192px; line-height: 106px; font-size: 79.2px; font-weight: 700; letter-spacing: -.24px; -webkit-text-stroke: .8px #31333f; }
.metrics { display: grid; grid-template-columns: repeat(4, 521px); gap: 32px; margin-top: 41px; }
.m-label { display: flex; align-items: center; gap: 7.5px; height: 40px; line-height: 40px; font-size: 25.2px; }
.m-label svg { width: 36px; height: 35px; }
.m-value { display: flex; align-items: center; gap: 14px; height: 94px; line-height: 92px; font-size: 64.8px; letter-spacing: -.2px; }
h2 { height: 86px; margin-top: 71px; line-height: 86px; font-size: 64.8px; font-weight: 600; letter-spacing: -1.48px; }
.caption { height: 40px; margin-top: 36px; line-height: 40px; font-size: 25.2px; color: #85868e; }

/* Charts */
.chart { margin-top: 44px; letter-spacing: 0; }
.second { margin-top: 40px; }
.c-title { font-size: 28.8px; font-weight: 700; fill: #31333f; stroke: #31333f; stroke-width: .3px; }
.grid { stroke: #e6eaf1; stroke-width: 2.4; fill: none; }
.zero { stroke-width: 3; }
.tick { font-size: 21.6px; fill: #808495; text-anchor: middle; }
.axis { font-size: 25.2px; fill: #808495; text-anchor: middle; }
.tick.y, .axis.y { text-anchor: end; }
.co path, .nox path { fill: none; stroke-width: 4px; stroke-miterlimit: 2; vector-effect: non-scaling-stroke; }
.co { stroke: #3a76b0; }
.nox { stroke: #ef8636; }
```
